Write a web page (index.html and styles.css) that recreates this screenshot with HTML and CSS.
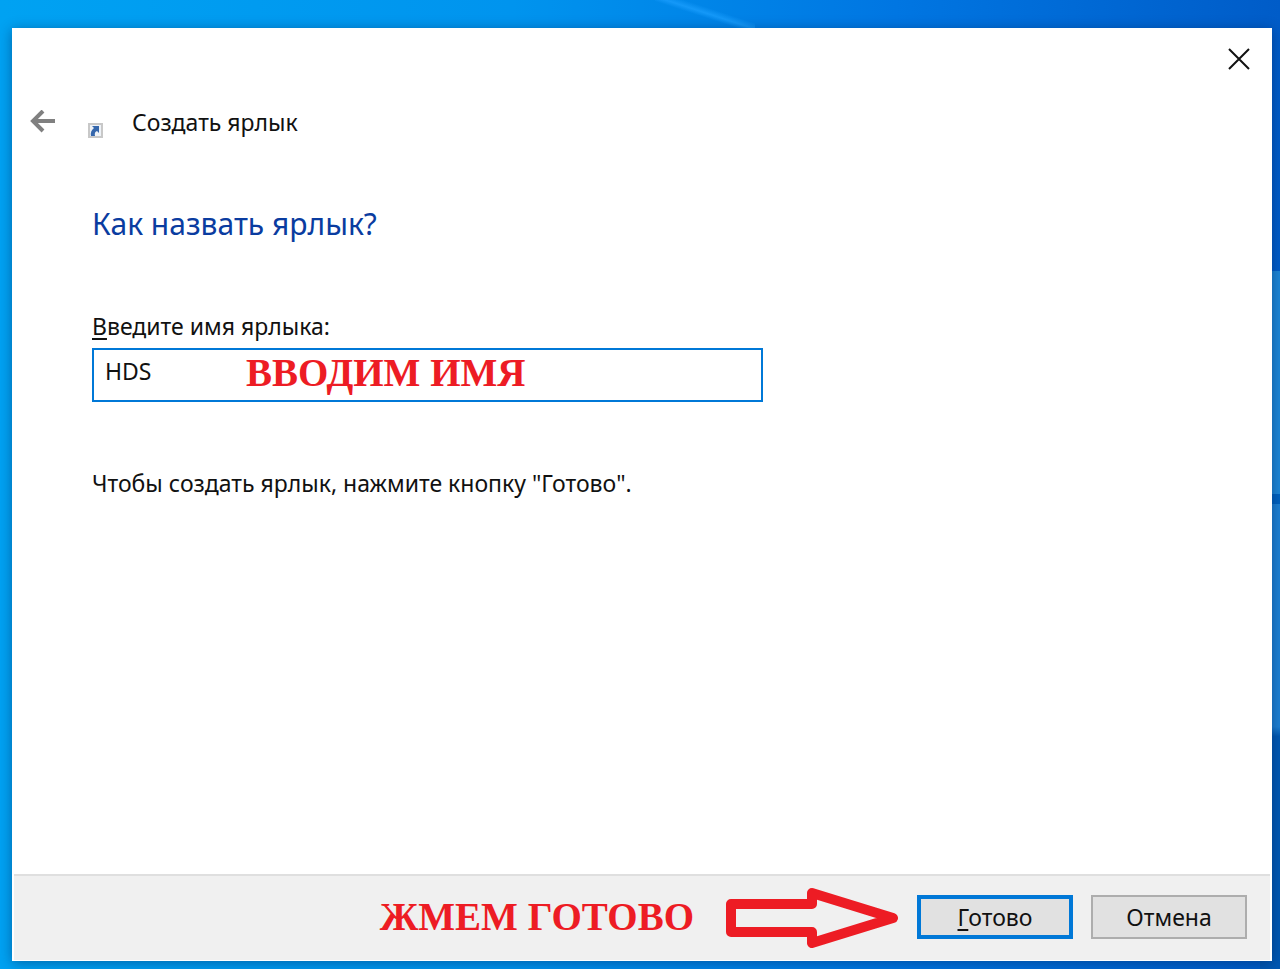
FILE: index.html
```html
<!DOCTYPE html>
<html lang="ru">
  <head>
    <meta charset="UTF-8" />
    <meta name="viewport" content="width=device-width, initial-scale=1.0" />
    <title>Создать ярлык</title>
    <link rel="stylesheet" href="styles.css">
  </head>
  <body>
    <form class="wizard" id="shortcut-form">
      <div class="titlebar">
        <button type="button" class="icon-button close" aria-label="Закрыть">
          <svg width="22" height="22" viewBox="0 0 22 22">
            <path d="M1 1L21 21M21 1L1 21" fill="none" stroke="#111" stroke-width="2" />
          </svg>
        </button>
      </div>
      <header class="header">
        <button type="button" class="icon-button" aria-label="Назад">
          <svg width="26" height="24" viewBox="0 0 26 24">
            <path d="M25 11H3M13 1L3 11L13 21" fill="none" stroke="#808080" stroke-width="4" />
          </svg>
        </button>
        <svg class="shortcut-icon" width="15" height="15" viewBox="0 0 15 15">
          <rect x="1" y="1" width="13" height="13" fill="#eef2f7" stroke="#c8c8c8" stroke-width="2" />
          <path d="M4 3H11V10L9 8Q6 9 7 13H3Q2 8 6 5Z" fill="#3567ac" />
        </svg>
        <span class="title">Создать ярлык</span>
      </header>
      <main class="content">
        <h1>Как назвать ярлык?</h1>
        <label for="name"><u>В</u>ведите имя ярлыка:</label>
        <div class="field">
          <input type="text" id="name" value="HDS" />
          <span class="note field-note">ВВОДИМ ИМЯ</span>
        </div>
        <p>Чтобы создать ярлык, нажмите кнопку "Готово".</p>
      </main>
      <footer class="footer">
        <span class="note">ЖМЕМ ГОТОВО</span>
        <svg class="arrow" width="174" height="62" viewBox="0 0 174 62">
          <path d="M6 18H87V7L168 32L87 57V46H6Z" fill="none" stroke="#ed1c24" stroke-width="10" stroke-linejoin="round" />
        </svg>
        <button type="submit" class="button primary"><u>Г</u>отово</button>
        <button type="button" class="button">Отмена</button>
      </footer>
    </form>
    <script>
      const form = document.getElementById("shortcut-form");

      form.addEventListener("submit", function (event) {
        event.preventDefault();
      });
    </script>
  </body>
</html>
```
FILE: styles.css
```css
/* General styles */
* {
  box-sizing: border-box;
}

body {
  margin: 0;
  min-height: 100vh;
  padding: 28px 8px 8px 12px;
  display: flex;
  font-family: "Noto Sans", "Open Sans", sans-serif;
  font-size: 23px;
  line-height: 32px;
  color: #111;
  background-color: #0078d7;
  /* light streak, window panes on the right, base glow */
  background-image:
    linear-gradient(18deg, transparent 44%, #1498f8 52%, transparent 62%),
    linear-gradient(transparent 28%, #1c86d6 28%, #1c86d6 51%, #0062bf 51%, #0062bf 52%, #1d80d3 52%, #1d80d3 75%, #0058b2 76%),
    linear-gradient(90deg, #00a2f2, #0094ee 40%, #0076e2 70%, #005cc8);
  background-size: 100px 28px, 20px 100%, 100% 100%;
  background-position: 655px 0, right top, left top;
  background-repeat: no-repeat;
}

.wizard {
  flex: 1;
  display: flex;
  flex-direction: column;
  background-color: #fff;
  box-shadow: 0 2px 12px rgba(0, 30, 80, 0.45);
}

.icon-button {
  display: flex;
  padding: 0;
  border: none;
  background: none;
  cursor: pointer;
}

.titlebar {
  display: flex;
  justify-content: flex-end;
  padding: 20px 22px 0;
}

/* Header */
.header {
  display: flex;
  align-items: center;
  margin-top: 36px;
  padding-left: 18px;
}

.shortcut-icon {
  margin: 16px 29px 0 32px;
}

/* Content */
.content {
  flex: 1;
  padding: 64px 80px 0;
}

h1 {
  margin: 0 0 64px;
  font-size: 30px;
  font-weight: normal;
  line-height: 44px;
  color: #0a3ca0;
}

label {
  display: block;
  margin-bottom: 6px;
}

u {
  text-underline-offset: 3px;
  text-decoration-thickness: 2px;
}

.field {
  position: relative;
  max-width: 671px;
}

input[type="text"] {
  display: block;
  width: 100%;
  height: 54px;
  padding: 0 11px 8px;
  border: 2px solid #0078d7;
  font: inherit;
  color: inherit;
}

input[type="text"]:focus {
  outline: none;
}

.note {
  font-family: "Liberation Serif", serif;
  font-size: 39px;
  font-weight: bold;
  line-height: 44px;
  color: #ed1c24;
  white-space: nowrap;
}

.field-note {
  position: absolute;
  top: 3px;
  left: 154px;
  pointer-events: none;
}

p {
  margin: 65px 0 0;
}

/* Footer */
.footer {
  display: flex;
  align-items: center;
  justify-content: flex-end;
  height: 86px;
  margin: 0 2px 1px;
  padding: 0 23px 2px 0;
  border-top: 2px solid #dfdfdf;
  background-color: #f0f0f0;
}

.arrow {
  margin: 0 18px 0 31px;
}

.button {
  width: 156px;
  height: 44px;
  padding: 0;
  border: 2px solid #adadad;
  background-color: #e1e1e1;
  font: inherit;
  color: inherit;
  cursor: pointer;
}

.button.primary {
  margin-right: 18px;
  border: 4px solid #0078d7;
}

.button:hover {
  background-color: #e5f1fb;
}
```
